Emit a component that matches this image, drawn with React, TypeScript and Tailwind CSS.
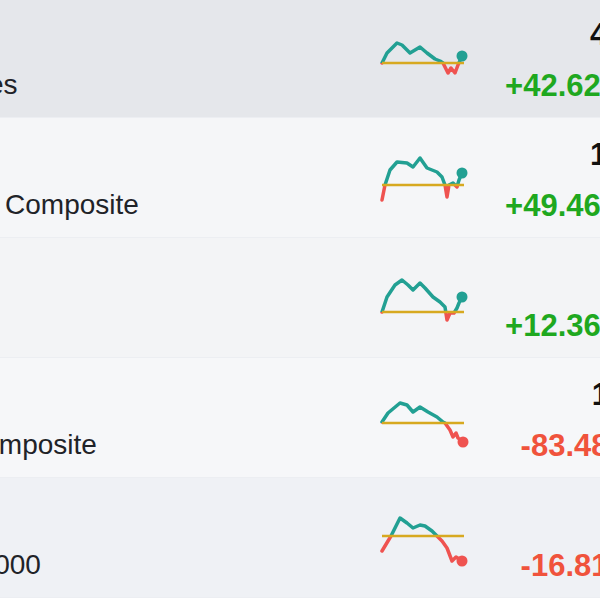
import React from "react";

type Pt = [number, number];

type Row = {
  name: string;
  price: string;
  change: string;
  up: boolean;
  bg: string;
  base: number;
  points: Pt[];
};

const rows: Row[] = [
  {
    name: "Dow Jones",
    price: "42,512.00",
    change: "+42.62 (+0.10%)",
    up: true,
    bg: "bg-[#e5e7eb]",
    base: 35,
    points: [
      [6, 35], [11, 25], [21, 15], [26, 17], [34, 25], [44, 19], [51, 25], [59, 31],
      [64, 33], [67, 35], [72, 45], [75, 40], [79, 45], [82, 37], [86, 28],
    ],
  },
  {
    name: "NASDAQ Composite",
    price: "17,935.26",
    change: "+49.46 (+0.28%)",
    up: true,
    bg: "bg-[#f5f6f8]",
    base: 37,
    points: [
      [6, 52], [9, 37], [14, 22], [21, 14], [31, 15], [37, 19], [44, 10], [51, 20],
      [61, 24], [66, 29], [69, 37], [71, 49], [73, 37], [77, 35], [81, 39], [83, 32], [86, 25],
    ],
  },
  {
    name: "S&P 500",
    price: "5,626.02",
    change: "+12.36 (+0.22%)",
    up: true,
    bg: "bg-[#f3f4f6]",
    base: 44,
    points: [
      [6, 44], [11, 29], [19, 17], [26, 12], [32, 17], [37, 22], [44, 15], [49, 20],
      [57, 29], [64, 34], [69, 39], [71, 52], [74, 45], [78, 45], [81, 40], [83, 35], [86, 29],
    ],
  },
  {
    name: "NYSE Composite",
    price: "19,114.07",
    change: "-83.48 (-0.44%)",
    up: false,
    bg: "bg-[#f6f7f9]",
    base: 35,
    points: [
      [6, 34], [12, 25], [24, 15], [31, 17], [37, 24], [44, 19], [52, 24], [61, 29],
      [67, 34], [69, 35], [74, 42], [77, 49], [80, 45], [82, 50], [87, 54],
    ],
  },
  {
    name: "Russell 2000",
    price: "2,187.42",
    change: "-16.81 (-0.76%)",
    up: false,
    bg: "bg-[#eff1f5]",
    base: 28,
    points: [
      [6, 43], [12, 33], [15, 28], [24, 10], [31, 15], [37, 20], [44, 17], [49, 18],
      [56, 23], [61, 28], [66, 33], [71, 40], [76, 53], [80, 49], [86, 53],
    ],
  },
];

const Sparkline: React.FC<{ row: Row; id: number }> = ({ row, id }) => {
  const d = row.points.map((p) => p.join(",")).join(" ");
  const last = row.points[row.points.length - 1];
  const dotUp = last[1] <= row.base;
  return (
    <svg width="96" height="64" viewBox="0 0 96 64" className="mt-[30px]">
      <defs>
        <clipPath id={`above-${id}`}>
          <rect x="0" y="0" width="96" height={row.base} />
        </clipPath>
        <clipPath id={`below-${id}`}>
          <rect x="0" y={row.base} width="96" height={64 - row.base} />
        </clipPath>
      </defs>
      <polyline
        points={d}
        fill="none"
        stroke="#22a093"
        strokeWidth="3.5"
        strokeLinejoin="round"
        strokeLinecap="round"
        clipPath={`url(#above-${id})`}
      />
      <polyline
        points={d}
        fill="none"
        stroke="#ef5350"
        strokeWidth="3.5"
        strokeLinejoin="round"
        strokeLinecap="round"
        clipPath={`url(#below-${id})`}
      />
      <line x1="6" y1={row.base} x2="88" y2={row.base} stroke="#d7a920" strokeWidth="2.5" />
      <circle cx={last[0]} cy={last[1]} r="5.5" fill={dotUp ? "#22a093" : "#ef5350"} />
    </svg>
  );
};

export default function App() {
  return (
    <div className="w-[600px] h-[600px] overflow-hidden bg-white font-['Liberation_Sans',Arial,sans-serif]">
      <div className="-mt-[2px] -ml-[121px] w-[900px]">
        {rows.map((row, i) => (
          <div key={row.name} className={`flex h-[120px] border-b border-[#eceef2] ${row.bg}`}>
            {/* name */}
            <div className="w-[497px] flex flex-col pt-[21px] gap-[18px] text-[28px] leading-[32px] text-[#1f2328]">
              <div className="h-[32px]" />
              <div className="whitespace-nowrap">{row.name}</div>
            </div>

            {/* chart */}
            <div className="w-[96px]">
              <Sparkline row={row} id={i} />
            </div>

            {/* price / change */}
            <div className="w-[264px] flex flex-col items-end pt-[20px] gap-[17px] text-[31px] leading-[34px] font-bold whitespace-nowrap">
              <div className="pr-[8px] text-[#111111]">{row.price}</div>
              <div className={row.up ? "text-[#1fa81f]" : "text-[#f0533c]"}>{row.change}</div>
            </div>
          </div>
        ))}
      </div>
    </div>
  );
}
